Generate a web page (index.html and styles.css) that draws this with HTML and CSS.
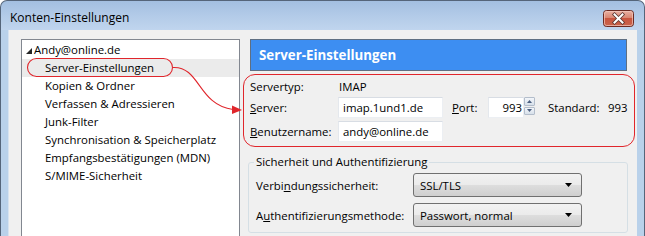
FILE: index.html
```html
<!DOCTYPE html>
<html lang="de">
<head>
<meta charset="utf-8">
<title>Konten-Einstellungen</title>
<link rel="stylesheet" href="styles.css">
</head>
<body>
<div class="window">
  <header class="titlebar">
    <span class="title">Konten-Einstellungen</span>
    <button class="close" aria-label="Schließen">
      <svg width="31" height="17" viewBox="0 0 31 17">
        <defs>
          <linearGradient id="cg" x1="0" y1="0" x2="0" y2="1">
            <stop offset="0" stop-color="#eab3a6"/>
            <stop offset="0.45" stop-color="#d98672"/>
            <stop offset="0.5" stop-color="#c9553f"/>
            <stop offset="1" stop-color="#c9644c"/>
          </linearGradient>
        </defs>
        <rect x="0.5" y="0.5" width="30" height="16" rx="3" fill="url(#cg)" stroke="#6b2a22"/>
        <rect x="1.5" y="1.5" width="28" height="14" rx="2" fill="none" stroke="#f3c9bf" stroke-opacity="0.7"/>
        <path d="M11.5 4.5 L19.5 12.5 M19.5 4.5 L11.5 12.5" stroke="#5a3530" stroke-width="3.6" stroke-linecap="square"/>
        <path d="M11.5 4.5 L19.5 12.5 M19.5 4.5 L11.5 12.5" stroke="#ffffff" stroke-width="2" stroke-linecap="square"/>
      </svg>
    </button>
  </header>
  <div class="client">
    <ul class="tree">
      <li class="node root"><svg class="twisty" width="6" height="6" viewBox="0 0 6 6"><polygon points="6,0 6,6 0,6" fill="#262626"/></svg>Andy@online.de</li>
      <li class="node child selected">Server-Einstellungen</li>
      <li class="node child">Kopien &amp; Ordner</li>
      <li class="node child">Verfassen &amp; Adressieren</li>
      <li class="node child">Junk-Filter</li>
      <li class="node child">Synchronisation &amp; Speicherplatz</li>
      <li class="node child">Empfangsbestätigungen (MDN)</li>
      <li class="node child">S/MIME-Sicherheit</li>
    </ul>
    <div class="pane">
      <div class="banner">Server-Einstellungen</div>
      <div class="server-box">
        <div class="row r1">
          <span class="lbl">Servertyp:</span><span class="val">IMAP</span>
        </div>
        <div class="row r2">
          <label class="lbl"><u>S</u>erver:</label>
          <input class="txt host" type="text" value="imap.1und1.de">
          <label class="port-lbl"><u>P</u>ort:</label>
          <span class="spin">
            <input class="txt port" type="text" value="993">
            <span class="spin-btns">
              <span class="sb up"><svg width="5" height="3" viewBox="0 0 5 3"><polygon points="2.5,0 5,3 0,3" fill="#4b5f80"/></svg></span>
              <span class="sb down"><svg width="5" height="3" viewBox="0 0 5 3"><polygon points="0,0 5,0 2.5,3" fill="#4b5f80"/></svg></span>
            </span>
          </span>
          <span class="std-lbl">Standard:</span><span class="std-val">993</span>
        </div>
        <div class="row r3">
          <label class="lbl"><u>B</u>enutzername:</label>
          <input class="txt host" type="text" value="andy@online.de">
        </div>
      </div>
      <fieldset class="group">
        <legend>Sicherheit und Authentifizierung</legend>
        <div class="grow">
          <label class="glbl">Verbi<u>n</u>dungssicherheit:</label>
          <div class="combo"><span class="combo-text">SSL/TLS</span><svg class="caret" width="7" height="4" viewBox="0 0 7 4"><polygon points="0,0 7,0 3.5,4" fill="#000"/></svg></div>
        </div>
        <div class="grow">
          <label class="glbl">A<u>u</u>thentifizierungsmethode:</label>
          <div class="combo"><span class="combo-text">Passwort, normal</span><svg class="caret" width="7" height="4" viewBox="0 0 7 4"><polygon points="0,0 7,0 3.5,4" fill="#000"/></svg></div>
        </div>
      </fieldset>
    </div>
  </div>
  <svg class="annot" width="645" height="236" viewBox="0 0 645 236">
    <rect x="27.5" y="58.5" width="145" height="18" rx="9" fill="none" stroke="#e0262c" stroke-width="1.1"/>
    <path d="M173 67.5 C200 66 198 105 233 109.5" fill="none" stroke="#e0262c" stroke-width="1.1"/>
    <polygon points="232,105.5 242,110 232,114" fill="#e0262c"/>
  </svg>
</div>
</body>
</html>
```

FILE: styles.css
```css
* { box-sizing: border-box; }

html, body {
  margin: 0;
  padding: 0;
  background: #ffffff;
}

body {
  font-family: "Open Sans", "Noto Sans", sans-serif;
  font-size: 11.4px;
  color: #000;
}

.window {
  position: relative;
  width: 645px;
  height: 236px;
  overflow: hidden;
  border: 1px solid #55657a;
  border-bottom: none;
  border-radius: 7px 7px 0 0;
  background: linear-gradient(to bottom, #a3bfe1 0px, #b3cbe8 15px, #c0d5ee 29px, #b9d1ea 29px, #b9d1ea 100%);
  display: flex;
  flex-direction: column;
}

.titlebar {
  height: 29px;
  flex: 0 0 29px;
  display: flex;
  align-items: flex-start;
  justify-content: space-between;
  padding: 0 10px 0 9px;
}

.title {
  margin-top: 9px;
  line-height: 16px;
  font-size: 12px;
  color: #000;
}

.close {
  margin-top: 9px;
  padding: 0;
  border: none;
  background: none;
  width: 31px;
  height: 17px;
  display: block;
}
.close svg { display: block; }

.client {
  flex: 1;
  margin: 0 7px;
  background: #f0f0f0;
  display: flex;
  align-items: flex-start;
  padding: 9px 0 0 12px;
  border-left: 1px solid #d7e3f0;
}

.tree {
  list-style: none;
  margin: 0;
  padding: 1px 0 0 0;
  width: 219px;
  height: 210px;
  flex: 0 0 219px;
  background: #fff;
  border: 1px solid #828790;
}

.node {
  height: 18px;
  line-height: 18px;
  white-space: nowrap;
}

.root {
  padding-left: 4px;
  display: flex;
  align-items: center;
}
.twisty {
  margin-right: 2px;
  margin-top: 2px;
}

.child { padding-left: 23px; }

.selected { background: #ebebeb; }

.pane {
  flex: 0 0 392px;
  margin-left: 3px;
  display: flex;
  flex-direction: column;
}

.banner {
  margin: 0 8px 0 7px;
  height: 32px;
  border: 1px solid #5f6f82;
  background: #3d8ef2;
  color: #fff;
  font-weight: 700;
  font-size: 13.3px;
  display: flex;
  align-items: center;
  padding-left: 8px;
}

.server-box {
  margin-top: 3px;
  border: 1px solid #e0262c;
  border-radius: 12px;
  padding: 0 6px 4px 6px;
  display: flex;
  flex-direction: column;
}

.row {
  display: flex;
  align-items: center;
}
.r1 { height: 22px; }
.r2 { height: 21px; }
.r3 { height: 21px; margin-top: 3px; }

.lbl { width: 88px; flex: 0 0 88px; }
.val { padding-left: 1px; }

.txt {
  font: inherit;
  color: #000;
  height: 21px;
  margin: 0;
  padding: 0 4px;
  background: #fff;
  border: 1px solid;
  border-color: #d8dde4 #eceff3 #eceff3 #e4e8ed;
  border-radius: 0;
  outline: none;
}
.host { width: 105px; }

.port-lbl {
  margin-left: 9px;
  width: 36px;
  flex: 0 0 36px;
}

.spin {
  display: flex;
  align-items: stretch;
  height: 21px;
}
.port {
  width: 36px;
  text-align: right;
  padding-right: 1px;
}
.spin-btns {
  width: 11px;
  display: flex;
  flex-direction: column;
  justify-content: space-between;
  padding: 0 0 3px 0;
}
.sb {
  height: 8.5px;
  display: flex;
  align-items: center;
  justify-content: center;
  border: 1px solid #b3bdcb;
  background: linear-gradient(to bottom, #f3f6fa, #d7e0ea);
  border-radius: 1px;
}
.sb svg { display: block; }

.std-lbl {
  margin-left: 13px;
  width: 60px;
  flex: 0 0 60px;
}

.group {
  margin: 7px 7px 0 5px;
  border: 1px solid #d5dfe5;
  border-radius: 3px;
  padding: 0 7px 5px 7px;
  min-width: 0;
}
.group legend {
  padding: 0 2px;
  margin-left: -2px;
  line-height: 16px;
  font-size: 11.4px;
}

.grow {
  display: flex;
  align-items: center;
  height: 24px;
  margin-top: 6px;
}
.grow:first-of-type { margin-top: 3px; }

.glbl { width: 157px; flex: 0 0 157px; }

.combo {
  width: 169px;
  height: 24px;
  border: 1px solid #707070;
  border-radius: 3px;
  background: linear-gradient(to bottom, #f2f2f2 0%, #ebebeb 48%, #dddddd 52%, #cfcfcf 100%);
  display: flex;
  align-items: center;
  justify-content: space-between;
  padding: 0 9px 0 6px;
}
.caret { display: block; }

.annot {
  position: absolute;
  left: -1px;
  top: -1px;
  pointer-events: none;
}
```
